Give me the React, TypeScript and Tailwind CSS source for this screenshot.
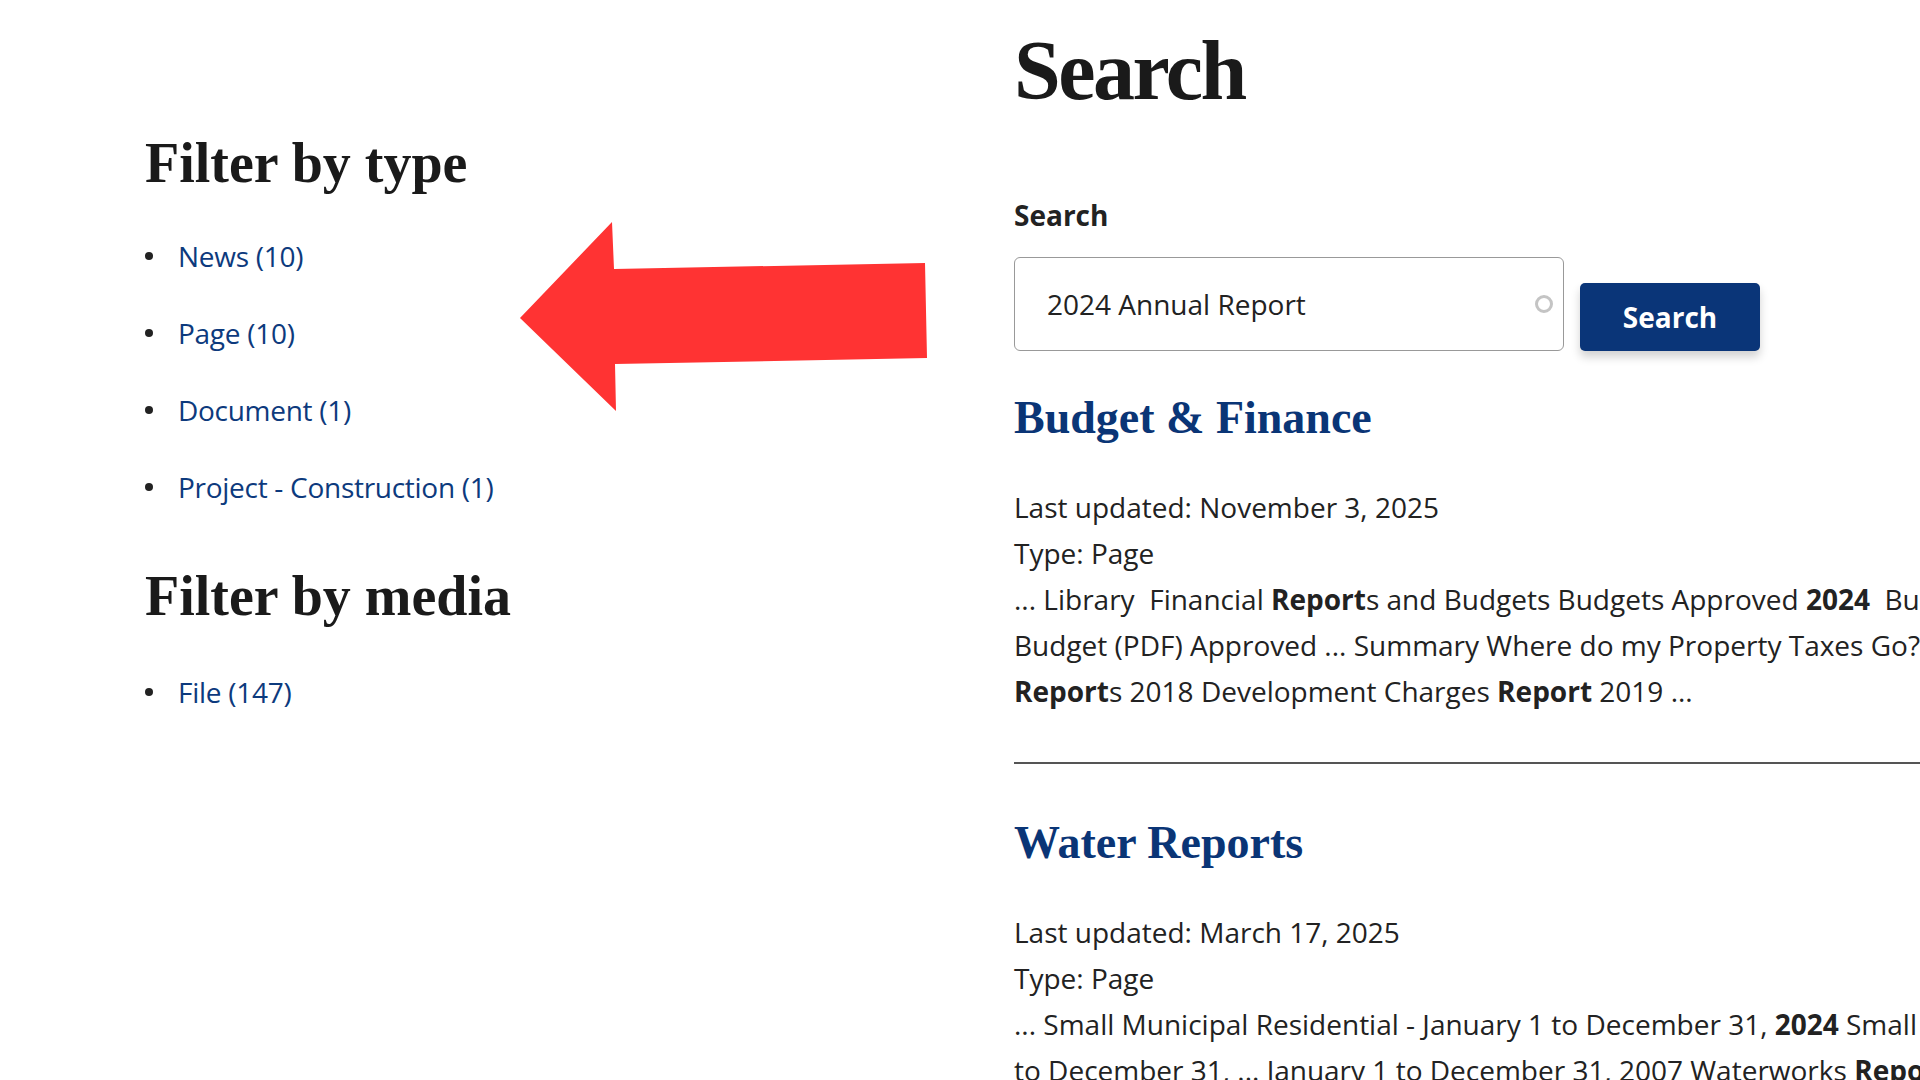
// search results page with type / media filters

import React from "react";

interface Filter {
  label: string;
  count: number;
}

const typeFilters: Filter[] = [
  { label: "News", count: 10 },
  { label: "Page", count: 10 },
  { label: "Document", count: 1 },
  { label: "Project - Construction", count: 1 },
];

const mediaFilters: Filter[] = [{ label: "File", count: 147 }];

const serif = "font-['Liberation_Serif',serif] font-bold";
const sans = "font-['Open_Sans',sans-serif]";

// one bullet row in a filter list
const FilterList = ({ items }: { items: Filter[] }) => (
  <ul className="flex flex-col gap-[37px]">
    {items.map((item) => (
      <li key={item.label} className="flex items-center gap-[25px] h-[40px]">
        <span className="w-2 h-2 rounded-full bg-[#222]" />
        <a href="#" className={`${sans} text-[28px] leading-[40px] font-medium tracking-[-0.01em] text-[#0d3a7d]`}>
          {item.label} ({item.count})
        </a>
      </li>
    ))}
  </ul>
);

// a single search hit, the snippet is given line by line
const Result = ({
  title,
  updated,
  lines,
}: {
  title: string;
  updated: string;
  lines: React.ReactNode[];
}) => (
  <div>
    <h2 className={`${serif} text-[46px] leading-[56px] text-[#0a3576]`}>
      <a href="#">{title}</a>
    </h2>
    <div className={`${sans} mt-[38px] text-[28px] leading-[46px] text-[#222] whitespace-pre`}>
      <p>Last updated: {updated}</p>
      <p>Type: Page</p>
      {lines.map((line, i) => (
        <p key={i}>{line}</p>
      ))}
    </div>
  </div>
);

const App = () => {
  return (
    <div className="relative w-[1920px] h-[1080px] overflow-hidden bg-white">
      <div className="flex">
        {/* filters column */}
        <aside className="w-[1014px] shrink-0 pl-[145px] pt-[131px]">
          <h2 className={`${serif} text-[56px] leading-[64px] text-[#1a1a1a]`}>Filter by type</h2>
          <div className="mt-[41px]">
            <FilterList items={typeFilters} />
          </div>
          <h2 className={`${serif} mt-[57px] text-[56px] leading-[64px] text-[#1a1a1a]`}>
            Filter by media
          </h2>
          <div className="mt-[44px]">
            <FilterList items={mediaFilters} />
          </div>
        </aside>

        {/* results column, runs past the right edge of the window */}
        <main className="w-[1000px] shrink-0 pt-[29px]">
          <h1 className={`${serif} text-[84px] leading-none tracking-[-0.03em] text-[#1a1a1a]`}>Search</h1>

          <label className={`${sans} block mt-[84px] text-[28px] leading-[36px] font-bold text-[#222]`}>
            Search
          </label>
          <div className="mt-[24px] flex items-end gap-4">
            <div className="relative w-[550px] h-[94px] rounded-[6px] border border-[#999] flex items-center pl-[32px]">
              <input
                type="search"
                defaultValue="2024 Annual Report"
                className={`${sans} w-full bg-transparent outline-none text-[28px] text-[#222]`}
              />
              <span className="absolute right-[10px] top-[37px] w-[18px] h-[18px] rounded-full border-[3px] border-[#c4c4c4]" />
            </div>
            <button
              className={`${sans} w-[180px] h-[68px] rounded-[5px] bg-[#0a3578] text-white text-[28px] font-bold shadow-[0_6px_10px_rgba(0,0,0,0.18)]`}
            >
              Search
            </button>
          </div>

          <div className="mt-[39px]">
            <Result
              title="Budget & Finance"
              updated="November 3, 2025"
              lines={[
                <>
                  ... Library  Financial <b>Report</b>s and Budgets Budgets Approved <b>2024</b>  Budget
                </>,
                <>Budget (PDF) Approved ... Summary Where do my Property Taxes Go? ...</>,
                <>
                  <b>Report</b>s 2018 Development Charges <b>Report</b> 2019 ...
                </>,
              ]}
            />
          </div>

          <hr className="mt-[48px] border-t-2 border-[#555]" />

          <div className="mt-[51px]">
            <Result
              title="Water Reports"
              updated="March 17, 2025"
              lines={[
                <>
                  ... Small Municipal Residential - January 1 to December 31, <b>2024</b> Small
                </>,
                <>
                  to December 31, ... January 1 to December 31, 2007 Waterworks <b>Report</b>
                </>,
              ]}
            />
          </div>
        </main>
      </div>

      {/* red annotation arrow */}
      <svg className="absolute left-0 top-0 pointer-events-none" width="1920" height="1080">
        <polygon
          points="520,318 612,222 614,269 925,263 927,358 615,364 616,411"
          fill="#ff3333"
        />
      </svg>
    </div>
  );
};

export default App;
